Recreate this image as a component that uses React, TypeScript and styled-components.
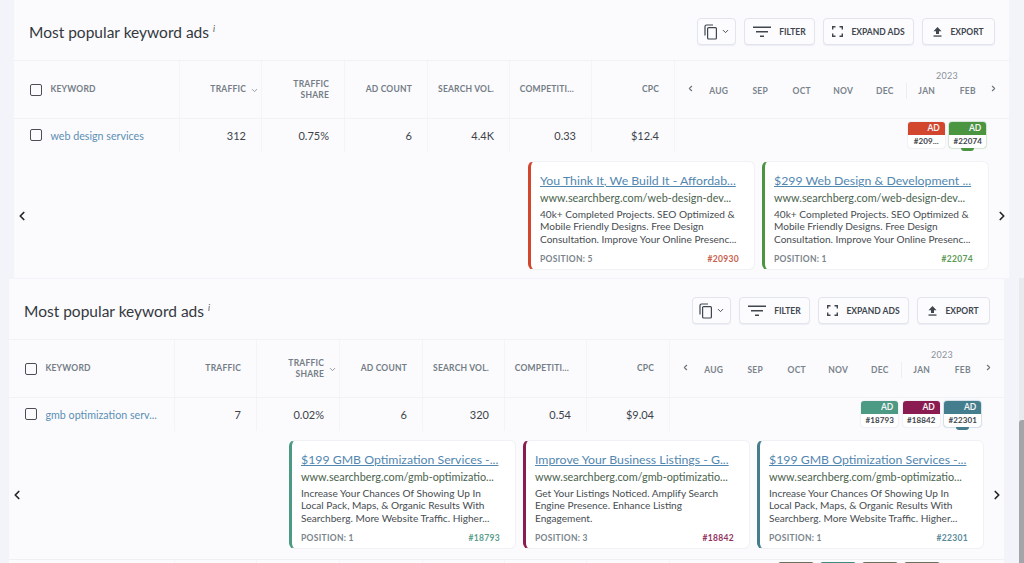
import React from 'react';
import styled, { createGlobalStyle } from 'styled-components';
import { ChevronDown, ChevronLeft, ChevronRight } from 'lucide-react';

const GlobalStyle = createGlobalStyle`
  html, body {
    margin: 0;
    height: 100%;
    overflow: hidden;
    background: #f3f4f9;
    font-family: Lato, "Liberation Sans", sans-serif;
  }
`;

const COLUMNS = '166px 82px 83px 83px 82px 82px 83px 334px';
const TIMELINE = '23px repeat(7, 41.5px) 1fr';

const Page = styled.div`
  position: relative;
  width: 1024px;
  height: 563px;
  overflow: hidden;
`;

const Panel = styled.section<{ $left: number; $top?: number }>`
  width: 995px;
  margin-left: ${(p) => p.$left}px;
  margin-top: ${(p) => p.$top ?? 0}px;
  padding-bottom: 8px;
  background: #fbfbfe;
`;

const TitleBar = styled.header`
  height: 60px;
  box-sizing: border-box;
  padding: 18px 14px 0 15px;
  display: flex;
  justify-content: space-between;
  align-items: flex-start;
`;

const Title = styled.h2`
  margin: 0;
  font-size: 15.5px;
  line-height: 28px;
  font-weight: 400;
  color: #33383d;

  sup {
    font-size: 9px;
    font-style: italic;
    margin-left: 4px;
    color: #555;
    line-height: 0;
  }
`;

const Toolbar = styled.div`
  display: flex;
  gap: 8px;
`;

const ToolButton = styled.button<{ $width: number; $gap?: number }>`
  width: ${(p) => p.$width}px;
  height: 27px;
  box-sizing: border-box;
  padding: 0;
  display: flex;
  align-items: center;
  justify-content: center;
  gap: ${(p) => p.$gap ?? 8}px;
  background: #fcfcff;
  border: 1px solid #e3e5ec;
  border-radius: 4px;
  box-shadow: 0 1px 1px #eceef3;
  color: #3f464d;
  font-family: inherit;
  font-size: 8.5px;
  font-weight: 700;
`;

const HeadRow = styled.div`
  display: grid;
  grid-template-columns: ${COLUMNS};
  height: 57px;
  border-top: 1px solid #f1f2f6;
  border-bottom: 1px solid #f1f2f6;
`;

const DataRow = styled.div`
  display: grid;
  grid-template-columns: ${COLUMNS};
  height: 33px;
`;

const Cell = styled.div<{ $sorted?: boolean }>`
  display: flex;
  align-items: center;
  justify-content: flex-end;
  box-sizing: border-box;
  padding-right: ${(p) => (p.$sorted ? 2 : 15)}px;
  border-right: 1px solid #f3f4f8;
  text-align: right;
  min-width: 0;
`;

const HeadCell = styled(Cell)`
  padding-top: 1px;
`;

const DataCell = styled(Cell)`
  padding-bottom: 1px;
`;

const KeywordHead = styled(HeadCell)`
  justify-content: flex-start;
  padding-left: 15.5px;
  padding-right: 0;
  gap: 9px;
`;

const KeywordData = styled(DataCell)`
  justify-content: flex-start;
  padding-left: 15.5px;
  padding-right: 0;
  gap: 9px;
`;

const HeadLabel = styled.span`
  font-size: 8.5px;
  line-height: 11.5px;
  font-weight: 700;
  letter-spacing: 0.2px;
  color: #747d85;
`;

const TruncatedLabel = styled(HeadLabel)`
  margin-right: 2px;
`;

const SortMark = styled(ChevronDown)`
  width: 9px;
  height: 9px;
  margin-left: 4px;
  flex: none;
  color: #747d85;
`;

const Value = styled.span`
  font-size: 11px;
  color: #3d4349;
`;

const KeywordLink = styled.a`
  font-size: 10.7px;
  color: #5c8fb3;
`;

const Box = styled.span`
  width: 12px;
  height: 12px;
  box-sizing: border-box;
  border: 1.5px solid #4b4f55;
  border-radius: 2px;
  flex: none;
`;

const Timeline = styled.div`
  display: grid;
  grid-template-columns: ${TIMELINE};
  grid-template-rows: 14px 16px;
  align-content: start;
  padding-top: 8px;
`;

const Year = styled.span`
  grid-column: 7 / 9;
  grid-row: 1;
  text-align: center;
  font-size: 9px;
  line-height: 14px;
  color: #8a9198;
  letter-spacing: 0.3px;
`;

const Month = styled.span<{ $divider?: boolean }>`
  grid-row: 2;
  text-align: center;
  font-size: 8.5px;
  line-height: 16px;
  font-weight: 700;
  letter-spacing: 0.3px;
  color: #7a838b;
  border-left: ${(p) => (p.$divider ? '1px solid #eceef3' : 'none')};
`;

const TimeArrow = styled.span<{ $side: 'prev' | 'next' }>`
  grid-row: 2;
  display: flex;
  align-items: flex-start;
  justify-content: ${(p) => (p.$side === 'prev' ? 'flex-end' : 'flex-start')};
  padding: 1px ${(p) => (p.$side === 'prev' ? 3 : 0)}px 0 0;
  color: #6b747c;

  svg {
    width: 9px;
    height: 9px;
    stroke-width: 3;
  }
`;

const ChipRow = styled.div`
  display: grid;
  grid-template-columns: ${TIMELINE};
  padding-top: 3px;
`;

const Chip = styled.div<{ $color: string; $active?: boolean; $col: number }>`
  grid-column: ${(p) => p.$col};
  grid-row: 1;
  justify-self: center;
  position: relative;
  width: 37px;
  height: 26px;
  box-sizing: border-box;
  border-radius: 3px;
  background: #fff;
  box-shadow: 0 0 1.5px ${(p) => (p.$active ? p.$color : '#c9ccd3')};
`;

const ChipTop = styled.div<{ $color: string }>`
  height: 13px;
  padding-right: 5px;
  border-radius: 3px 3px 0 0;
  background: ${(p) => p.$color};
  color: #f3f3f3;
  font-size: 8.5px;
  line-height: 13px;
  font-weight: 700;
  text-align: right;
`;

const ChipCode = styled.div`
  font-size: 8px;
  line-height: 13px;
  font-weight: 700;
  letter-spacing: 0.1px;
  text-align: center;
  color: #3d4349;
`;

const ChipTab = styled.span<{ $color: string }>`
  position: absolute;
  left: 12px;
  bottom: -3px;
  width: 13px;
  height: 3px;
  border-radius: 0 0 3px 3px;
  background: ${(p) => p.$color};
`;

const Carousel = styled.div`
  display: flex;
  align-items: center;
  height: 109px;
  margin-top: 9px;
  padding-left: 1px;
`;

const CarouselArrow = styled.span`
  display: flex;
  width: 14px;
  color: #23272b;

  svg {
    width: 14px;
    height: 14px;
    stroke-width: 3;
  }
`;

const Cards = styled.div`
  flex: 1;
  display: flex;
  justify-content: flex-end;
  gap: 7px;
  padding-right: 6px;
`;

const Card = styled.article<{ $color: string }>`
  width: 227px;
  height: 109px;
  box-sizing: border-box;
  padding: 11px 15px 0 9px;
  background: #fff;
  border: 1px solid #f0f1f5;
  border-left: 3px solid ${(p) => p.$color};
  border-radius: 6px;
  display: flex;
  flex-direction: column;
`;

const CardTitle = styled.a`
  font-size: 12.3px;
  line-height: 16px;
  color: #5287b0;
  text-decoration: underline;
  text-decoration-thickness: 1px;
  white-space: nowrap;
`;

const CardUrl = styled.div`
  margin-top: 2px;
  font-size: 10.85px;
  line-height: 14px;
  color: #4a634d;
  white-space: nowrap;
`;

const CardText = styled.p`
  margin: 3px 0 0;
  height: 38px;
  font-size: 10.1px;
  line-height: 12.4px;
  color: #474c51;
  white-space: pre;
`;

const CardFoot = styled.div`
  margin-top: 7px;
  display: flex;
  justify-content: space-between;
  font-size: 8.5px;
  line-height: 12px;
  font-weight: 700;
  letter-spacing: 0.3px;
  color: #7b848b;
`;

const CardCode = styled.span<{ $color: string }>`
  color: ${(p) => p.$color};
`;

const NextRow = styled.div`
  display: grid;
  grid-template-columns: ${COLUMNS};
  height: 12px;
  margin-top: 10px;
  border-top: 1px solid #eff0f4;
`;

const StubChips = styled.div`
  display: flex;
  justify-content: flex-end;
  gap: 6px;
  padding: 2px 64px 0 0;
`;

const StubChip = styled.span<{ $color: string }>`
  width: 36px;
  height: 6px;
  border-radius: 3px 3px 0 0;
  background: ${(p) => p.$color};
`;

const Scrollbar = styled.div`
  position: absolute;
  right: 0;
  top: 278px;
  bottom: 0;
  width: 5px;
  background: #e9eaee;
`;

const ScrollThumb = styled.div`
  margin-top: 142px;
  height: 143px;
  background: #a3a5a9;
  border-radius: 3px 0 0 0;
`;

const CopyIcon = () => (
  <svg width="15" height="16" viewBox="0 0 15 16" fill="none" stroke="#3f464d" strokeWidth="1.2">
    <path d="M1 11.5V2.5A1.5 1.5 0 0 1 2.5 1H9" />
    <rect x="3.6" y="3.6" width="8.8" height="11.4" rx="1" />
  </svg>
);

const FilterIcon = () => (
  <svg width="18" height="12" viewBox="0 0 18 12" fill="#3f464d">
    <rect x="0" y="0.5" width="18" height="1.5" />
    <rect x="3" y="5" width="12" height="1.5" />
    <rect x="7" y="9.5" width="4" height="1.5" />
  </svg>
);

const ExpandIcon = () => (
  <svg width="11" height="11" viewBox="0 0 11 11" fill="none" stroke="#3f464d" strokeWidth="1.4">
    <path d="M0.7 3.5V0.7H3.5M7.5 0.7H10.3V3.5M10.3 7.5V10.3H7.5M3.5 10.3H0.7V7.5" />
  </svg>
);

const ExportIcon = () => (
  <svg width="9" height="10" viewBox="0 0 9 10" fill="#3f464d">
    <path d="M4.5 0L8.5 4.2H6V7H3V4.2H0.5Z" />
    <rect x="0.5" y="8.4" width="8" height="1.3" />
  </svg>
);

const Tools = () => (
  <Toolbar>
    <ToolButton $width={39} $gap={2}>
      <CopyIcon />
      <ChevronDown size={9} strokeWidth={2.5} />
    </ToolButton>
    <ToolButton $width={71}>
      <FilterIcon />
      FILTER
    </ToolButton>
    <ToolButton $width={91}>
      <ExpandIcon />
      EXPAND ADS
    </ToolButton>
    <ToolButton $width={73}>
      <ExportIcon />
      EXPORT
    </ToolButton>
  </Toolbar>
);

const months = ['AUG', 'SEP', 'OCT', 'NOV', 'DEC', 'JAN', 'FEB'];

const TableHead = ({ sortBy }: { sortBy: string }) => (
  <HeadRow>
    <KeywordHead>
      <Box />
      <HeadLabel>KEYWORD</HeadLabel>
    </KeywordHead>
    <HeadCell $sorted={sortBy === 'traffic'}>
      <HeadLabel>TRAFFIC</HeadLabel>
      {sortBy === 'traffic' && <SortMark />}
    </HeadCell>
    <HeadCell $sorted={sortBy === 'share'}>
      <HeadLabel>
        TRAFFIC
        <br />
        SHARE
      </HeadLabel>
      {sortBy === 'share' && <SortMark />}
    </HeadCell>
    <HeadCell>
      <HeadLabel>AD COUNT</HeadLabel>
    </HeadCell>
    <HeadCell>
      <HeadLabel>SEARCH VOL.</HeadLabel>
    </HeadCell>
    <HeadCell>
      <TruncatedLabel>COMPETITI...</TruncatedLabel>
    </HeadCell>
    <HeadCell>
      <HeadLabel>CPC</HeadLabel>
    </HeadCell>
    <Timeline>
      <Year>2023</Year>
      <TimeArrow $side="prev">
        <ChevronLeft />
      </TimeArrow>
      {months.map((m) => (
        <Month key={m} $divider={m === 'JAN'}>
          {m}
        </Month>
      ))}
      <TimeArrow $side="next">
        <ChevronRight />
      </TimeArrow>
    </Timeline>
  </HeadRow>
);

type Ad = {
  title: string;
  url: string;
  text: string;
  position: number;
  code: string;
  short?: string;
  color: string;
  soft: string;
  col: number;
  active?: boolean;
};

type Row = {
  keyword: string;
  traffic: string;
  share: string;
  count: string;
  volume: string;
  competition: string;
  cpc: string;
  ads: Ad[];
};

type AdsTableProps = {
  row: Row;
  left: number;
  top?: number;
  sortBy: string;
  children?: React.ReactNode;
};

const AdsTable = ({ row, left, top, sortBy, children }: AdsTableProps) => (
  <Panel $left={left} $top={top}>
    <TitleBar>
      <Title>
        Most popular keyword ads<sup>i</sup>
      </Title>
      <Tools />
    </TitleBar>
    <TableHead sortBy={sortBy} />
    <DataRow>
      <KeywordData>
        <Box />
        <KeywordLink>{row.keyword}</KeywordLink>
      </KeywordData>
      <DataCell>
        <Value>{row.traffic}</Value>
      </DataCell>
      <DataCell>
        <Value>{row.share}</Value>
      </DataCell>
      <DataCell>
        <Value>{row.count}</Value>
      </DataCell>
      <DataCell>
        <Value>{row.volume}</Value>
      </DataCell>
      <DataCell>
        <Value>{row.competition}</Value>
      </DataCell>
      <DataCell>
        <Value>{row.cpc}</Value>
      </DataCell>
      <ChipRow>
        {row.ads.map((ad) => (
          <Chip key={ad.code} $color={ad.color} $col={ad.col} $active={ad.active}>
            <ChipTop $color={ad.color}>AD</ChipTop>
            <ChipCode>{ad.short ?? `#${ad.code}`}</ChipCode>
            {ad.active && <ChipTab $color={ad.color} />}
          </Chip>
        ))}
      </ChipRow>
    </DataRow>
    <Carousel>
      <CarouselArrow>
        <ChevronLeft />
      </CarouselArrow>
      <Cards>
        {row.ads.map((ad) => (
          <Card key={ad.code} $color={ad.color}>
            <CardTitle>{ad.title}</CardTitle>
            <CardUrl>{ad.url}</CardUrl>
            <CardText>{ad.text}</CardText>
            <CardFoot>
              <span>POSITION: {ad.position}</span>
              <CardCode $color={ad.soft}>#{ad.code}</CardCode>
            </CardFoot>
          </Card>
        ))}
      </Cards>
      <CarouselArrow>
        <ChevronRight />
      </CarouselArrow>
    </Carousel>
    {children}
  </Panel>
);

const webDesign: Row = {
  keyword: 'web design services',
  traffic: '312',
  share: '0.75%',
  count: '6',
  volume: '4.4K',
  competition: '0.33',
  cpc: '$12.4',
  ads: [
    {
      title: 'You Think It, We Build It - Affordab...',
      url: 'www.searchberg.com/web-design-dev...',
      text: '40k+ Completed Projects. SEO Optimized &\nMobile Friendly Designs. Free Design\nConsultation. Improve Your Online Presenc...',
      position: 5,
      code: '20930',
      short: '#209...',
      color: '#d2462e',
      soft: '#c9604c',
      col: 7,
    },
    {
      title: '$299 Web Design & Development ...',
      url: 'www.searchberg.com/web-design-dev...',
      text: '40k+ Completed Projects. SEO Optimized &\nMobile Friendly Designs. Free Design\nConsultation. Improve Your Online Presenc...',
      position: 1,
      code: '22074',
      color: '#4b9440',
      soft: '#5d9a55',
      col: 8,
      active: true,
    },
  ],
};

const gmb: Row = {
  keyword: 'gmb optimization serv...',
  traffic: '7',
  share: '0.02%',
  count: '6',
  volume: '320',
  competition: '0.54',
  cpc: '$9.04',
  ads: [
    {
      title: '$199 GMB Optimization Services -...',
      url: 'www.searchberg.com/gmb-optimizatio...',
      text: 'Increase Your Chances Of Showing Up In\nLocal Pack, Maps, & Organic Results With\nSearchberg. More Website Traffic. Higher...',
      position: 1,
      code: '18793',
      color: '#4c9a83',
      soft: '#5a9e8b',
      col: 6,
    },
    {
      title: 'Improve Your Business Listings - G...',
      url: 'www.searchberg.com/gmb-optimizatio...',
      text: 'Get Your Listings Noticed. Amplify Search\nEngine Presence. Enhance Listing\nEngagement.',
      position: 3,
      code: '18842',
      color: '#8a1c52',
      soft: '#93335f',
      col: 7,
    },
    {
      title: '$199 GMB Optimization Services -...',
      url: 'www.searchberg.com/gmb-optimizatio...',
      text: 'Increase Your Chances Of Showing Up In\nLocal Pack, Maps, & Organic Results With\nSearchberg. More Website Traffic. Higher...',
      position: 1,
      code: '22301',
      color: '#447d8e',
      soft: '#5a8a99',
      col: 8,
      active: true,
    },
  ],
};

const App = () => (
  <Page>
    <GlobalStyle />
    <AdsTable row={webDesign} left={14} sortBy="traffic" />
    <AdsTable row={gmb} left={9} top={1} sortBy="share">
      <NextRow>
        <Cell />
        <Cell />
        <Cell />
        <Cell />
        <Cell />
        <Cell />
        <Cell />
        <StubChips>
          <StubChip $color="#6c6f5c" />
          <StubChip $color="#3f8a7c" />
          <StubChip $color="#6c6f5c" />
          <StubChip $color="#6c6f5c" />
        </StubChips>
      </NextRow>
    </AdsTable>
    <Scrollbar>
      <ScrollThumb />
    </Scrollbar>
  </Page>
);

export default App;
